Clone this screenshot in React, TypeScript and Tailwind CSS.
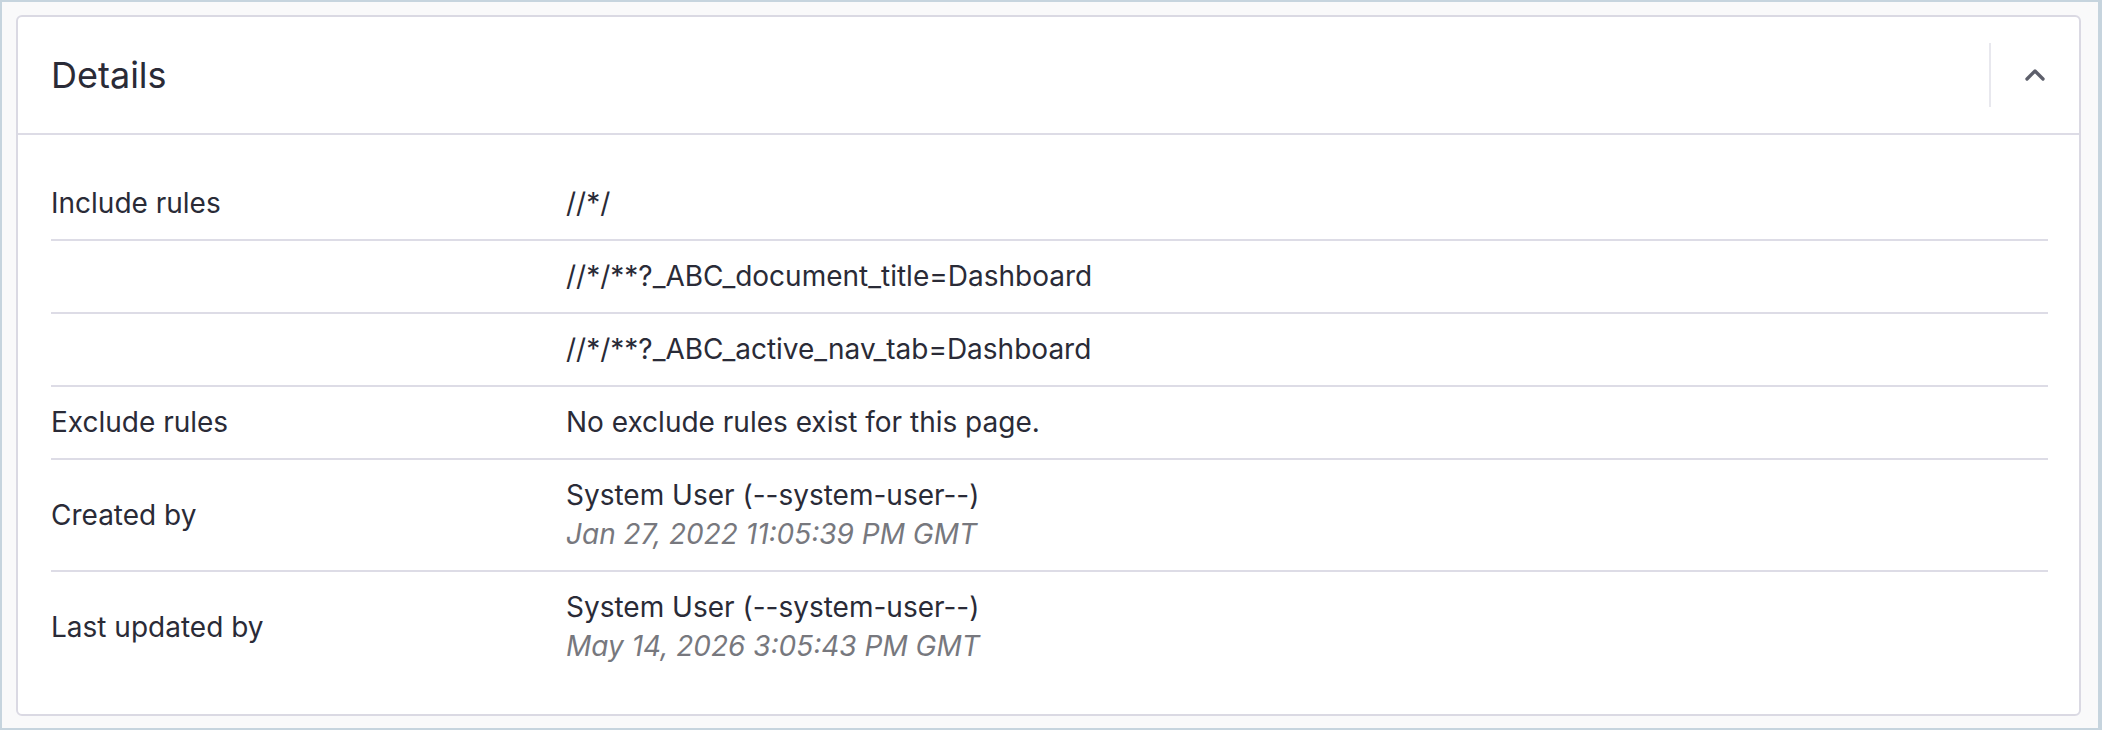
import { ChevronUp } from 'lucide-react';

type Row = { label?: string; value: string; sub?: string };

const rows: Row[] = [
  { label: 'Include rules', value: '//*/' },
  { value: '//*/**?_ABC_document_title=Dashboard' },
  { value: '//*/**?_ABC_active_nav_tab=Dashboard' },
  { label: 'Exclude rules', value: 'No exclude rules exist for this page.' },
  { label: 'Created by', value: 'System User (--system-user--)', sub: 'Jan 27, 2022 11:05:39 PM GMT' },
  { label: 'Last updated by', value: 'System User (--system-user--)', sub: 'May 14, 2026 3:05:43 PM GMT' },
];

function DetailRow({ row, last }: { row: Row; last: boolean }) {
  return (
    <div className={`flex items-center py-[16px] ${last ? '' : 'border-b-2 border-[#dddce6]'}`}>
      <div className="w-[515px] shrink-0">{row.label}</div>
      <div className="flex flex-col">
        <span>{row.value}</span>
        {row.sub && <span className="italic text-[#77787e]">{row.sub}</span>}
      </div>
    </div>
  );
}

export default function App() {
  return (
    <div
      className="h-[730px] w-full border-2 border-r-4 border-[#c6d4de] bg-[#f9f9fa] pt-[13px] pb-[12px] pl-[14px] pr-[17px] text-[#2a2b37]"
      style={{ fontFamily: 'Inter, "Noto Sans", sans-serif' }}
    >
      <div className="flex h-full flex-col rounded-[6px] border-2 border-[#dad9e3] bg-white">
        <div className="flex h-[118px] shrink-0 items-center border-b-2 border-[#dddce6]">
          <h2 className="flex-1 pl-[33px] text-[36px] font-normal leading-none">Details</h2>
          <div className="h-[64px] w-[2px] bg-[#e8e8ee]" />
          <button className="flex h-full w-[88px] items-center justify-center text-[#5d5f6b]">
            <ChevronUp size={32} strokeWidth={2.5} />
          </button>
        </div>
        <div className="flex flex-col pl-[33px] pr-[31px] pt-[33px] text-[28px] leading-[39px]">
          {rows.map((r, i) => (
            <DetailRow key={i} row={r} last={i === rows.length - 1} />
          ))}
        </div>
      </div>
    </div>
  );
}
